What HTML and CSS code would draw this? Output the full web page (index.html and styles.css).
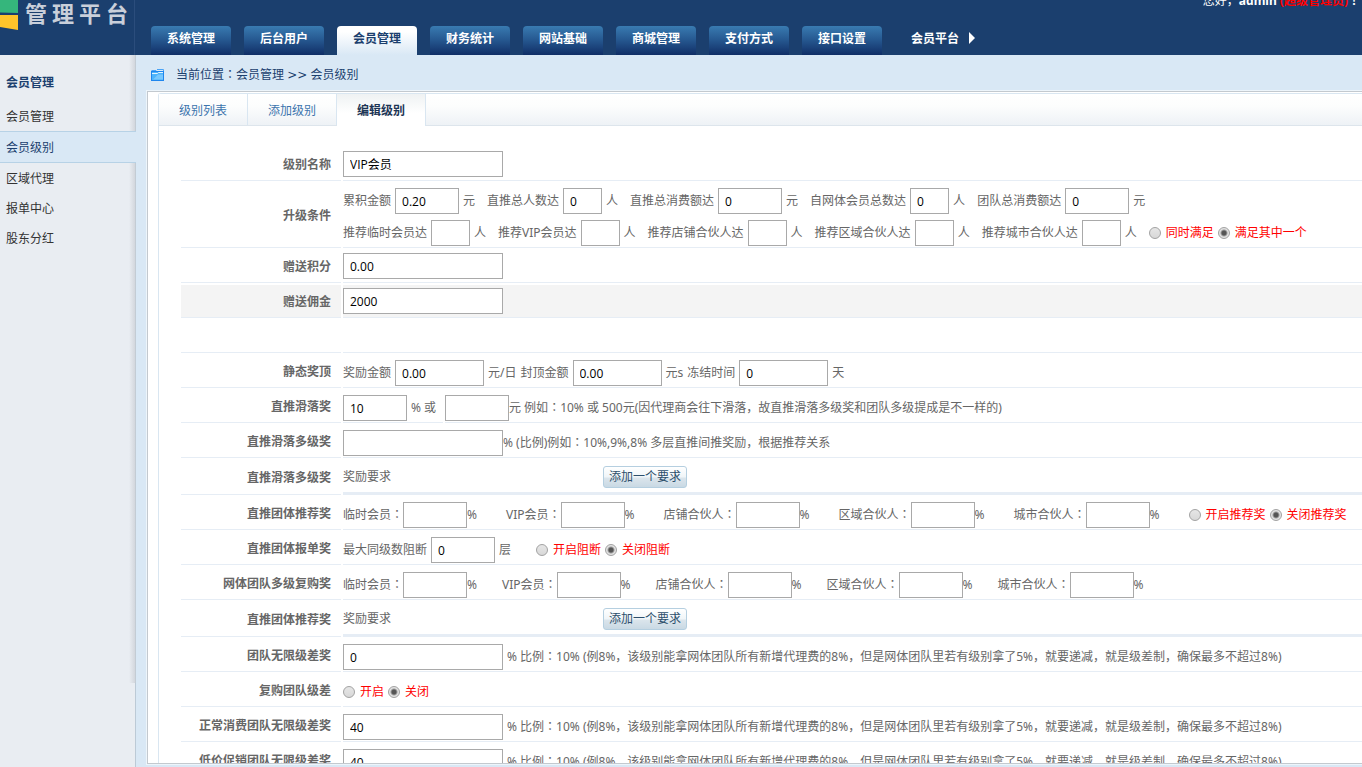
FILE: index.html
```html
<!DOCTYPE html>
<html lang="zh-CN">
<head>
<meta charset="utf-8">
<title>管理平台</title>
<link rel="stylesheet" href="styles.css">
</head>
<body>
<header class="top">
  <div class="brand">
    <svg class="brand-mark" viewBox="0 0 18 30" width="18" height="30" aria-hidden="true">
      <path d="M0 0H18V13L0 12.500Z" fill="#35b67c"/>
      <path d="M0 15H18V30L0 27Z" fill="#ffc42b"/>
    </svg>
    <span class="brand-name">管理平台</span>
  </div>
  <div class="top-main">
    <div class="user">您好，<b>admin <span class="role">(超级管理员)</span><i class="colon" lang="ja">！</i></b></div>
    <nav class="nav">
      <a class="nav-item" href="#">系统管理</a>
      <a class="nav-item" href="#">后台用户</a>
      <a class="nav-item nav-active" href="#">会员管理</a>
      <a class="nav-item" href="#">财务统计</a>
      <a class="nav-item" href="#">网站基础</a>
      <a class="nav-item" href="#">商城管理</a>
      <a class="nav-item" href="#">支付方式</a>
      <a class="nav-item" href="#">接口设置</a>
      <a class="nav-item nav-plain" href="#">会员平台<svg viewBox="0 0 6 12" width="6" height="12" aria-hidden="true"><path d="M0 0L6 6L0 12Z" fill="#fff"/></svg></a>
    </nav>
  </div>
</header>
<div class="body">
  <aside class="side">
    <div class="side-inner">
      <h2 class="side-title">会员管理</h2>
      <a class="side-item" href="#">会员管理</a>
      <a class="side-item side-active" href="#">会员级别</a>
      <a class="side-item" href="#">区域代理</a>
      <a class="side-item" href="#">报单中心</a>
      <a class="side-item" href="#">股东分红</a>
    </div>
  </aside>
  <main class="main">
    <div class="crumb">
      <svg viewBox="0 0 13 12" width="13" height="12" aria-hidden="true">
        <path d="M0.500 1.500H5L6 2.500" fill="none" stroke="#4aa3f5"/>
        <path d="M6 .5H12.500V3" fill="none" stroke="#4aa3f5"/>
        <rect x=".5" y="2.500" width="12" height="9" fill="#4db4fb" stroke="#1f86ee"/>
        <path d="M1 4.500H6.500L7.500 3.500H12" fill="none" stroke="#e4f4ff"/>
        <path d="M2 10.500L7 5.500H12V10.500Z" fill="#8ad0ff" opacity=".7"/>
      </svg>
      <span>当前位置<i class="colon" lang="ja">：</i>会员管理 <span class="sep">&gt;&gt;</span> 会员级别</span>
    </div>
    <div class="frame">
      <div class="panel">
        <nav class="tabs">
          <a class="tab" href="#">级别列表</a>
          <a class="tab" href="#">添加级别</a>
          <a class="tab tab-active" href="#">编辑级别</a>
        </nav>
        <form class="form">
          <div class="row">
            <label class="name" for="f1">级别名称</label>
            <div class="cell"><input class="w-l" id="f1" type="text" value="VIP会员"></div>
          </div>
          <div class="row">
            <span class="name">升级条件</span>
            <div class="cell stack">
              <div class="line">
                <label>累积金额 <input class="w-m" type="text" value="0.20"> 元</label>
                <label>直推总人数达 <input class="w-s" type="text" value="0"> 人</label>
                <label>直推总消费额达 <input class="w-m" type="text" value="0"> 元</label>
                <label>自网体会员总数达 <input class="w-s" type="text" value="0"> 人</label>
                <label>团队总消费额达 <input class="w-m" type="text" value="0"> 元</label>
              </div>
              <div class="line">
                <label>推荐临时会员达 <input class="w-s" type="text"> 人</label>
                <label>推荐VIP会员达 <input class="w-s" type="text"> 人</label>
                <label>推荐店铺合伙人达 <input class="w-s" type="text"> 人</label>
                <label>推荐区域合伙人达 <input class="w-s" type="text"> 人</label>
                <label>推荐城市合伙人达 <input class="w-s" type="text"> 人</label>
                <span class="choices">
                  <label class="choice"><input type="radio" name="cond">同时满足</label>
                  <label class="choice"><input type="radio" name="cond" checked>满足其中一个</label>
                </span>
              </div>
            </div>
          </div>
          <div class="row">
            <label class="name" for="f2">赠送积分</label>
            <div class="cell"><input class="w-l" id="f2" type="text" value="0.00"></div>
          </div>
          <div class="row row-hover">
            <label class="name" for="f3">赠送佣金</label>
            <div class="cell"><input class="w-l" id="f3" type="text" value="2000"></div>
          </div>
          <div class="row">
            <span class="name"></span>
            <div class="cell"></div>
          </div>
          <div class="row">
            <span class="name">静态奖顶</span>
            <div class="cell low">
              <label>奖励金额 <input class="w-x" type="text" value="0.00"> 元/日</label>
              <label>封顶金额 <input class="w-x" type="text" value="0.00"> 元s</label>
              <label>冻结时间 <input class="w-x" type="text" value="0"> 天</label>
            </div>
          </div>
          <div class="row row-split">
            <span class="name">直推滑落奖</span>
            <div class="cell low"><label><input class="w-m" type="text" value="10"> % 或</label></div>
            <div class="cell low"><label class="tight"><input class="w-m" type="text"><span>元 例如<i class="colon" lang="ja">：</i>10% 或 500元(因代理商会往下滑落，故直推滑落多级奖和团队多级提成是不一样的)</span></label></div>
          </div>
          <div class="row">
            <label class="name" for="f4">直推滑落多级奖</label>
            <div class="cell low tight"><input class="w-l" id="f4" type="text"><span>% (比例)例如<i class="colon" lang="ja">：</i>10%,9%,8% 多层直推间推奖励，根据推荐关系</span></div>
          </div>
          <div class="row">
            <span class="name">直推滑落多级奖</span>
            <div class="cell need"><span class="need-text">奖励要求</span><button class="add" type="button">添加一个要求</button></div>
          </div>
          <div class="row">
            <span class="name">直推团体推荐奖</span>
            <div class="cell low gap-xl">
              <label class="tight"><span>临时会员<i class="colon" lang="ja">：</i></span><input class="w-m" type="text">%</label>
              <label class="tight"><span>VIP会员<i class="colon" lang="ja">：</i></span><input class="w-m" type="text">%</label>
              <label class="tight"><span>店铺合伙人<i class="colon" lang="ja">：</i></span><input class="w-m" type="text">%</label>
              <label class="tight"><span>区域合伙人<i class="colon" lang="ja">：</i></span><input class="w-m" type="text">%</label>
              <label class="tight"><span>城市合伙人<i class="colon" lang="ja">：</i></span><input class="w-m" type="text">%</label>
              <span class="choices">
                <label class="choice"><input type="radio" name="rec">开启推荐奖</label>
                <label class="choice"><input type="radio" name="rec" checked>关闭推荐奖</label>
              </span>
            </div>
          </div>
          <div class="row">
            <span class="name">直推团体报单奖</span>
            <div class="cell low gap-l">
              <label>最大同级数阻断 <input class="w-m" type="text" value="0"> 层</label>
              <span class="choices">
                <label class="choice"><input type="radio" name="block">开启阻断</label>
                <label class="choice"><input type="radio" name="block" checked>关闭阻断</label>
              </span>
            </div>
          </div>
          <div class="row">
            <span class="name">网体团队多级复购奖</span>
            <div class="cell low gap-l">
              <label class="tight"><span>临时会员<i class="colon" lang="ja">：</i></span><input class="w-m" type="text">%</label>
              <label class="tight"><span>VIP会员<i class="colon" lang="ja">：</i></span><input class="w-m" type="text">%</label>
              <label class="tight"><span>店铺合伙人<i class="colon" lang="ja">：</i></span><input class="w-m" type="text">%</label>
              <label class="tight"><span>区域合伙人<i class="colon" lang="ja">：</i></span><input class="w-m" type="text">%</label>
              <label class="tight"><span>城市合伙人<i class="colon" lang="ja">：</i></span><input class="w-m" type="text">%</label>
            </div>
          </div>
          <div class="row">
            <span class="name">直推团体推荐奖</span>
            <div class="cell need"><span class="need-text">奖励要求</span><button class="add" type="button">添加一个要求</button></div>
          </div>
          <div class="row">
            <label class="name" for="f5">团队无限级差奖</label>
            <div class="cell low"><input class="w-l" id="f5" type="text" value="0"><span>% 比例<i class="colon" lang="ja">：</i>10% (例8%，该级别能拿网体团队所有新增代理费的8%，但是网体团队里若有级别拿了5%，就要递减，就是级差制，确保最多不超过8%)</span></div>
          </div>
          <div class="row">
            <span class="name">复购团队级差</span>
            <div class="cell low">
              <span class="choices">
                <label class="choice"><input type="radio" name="rebuy">开启</label>
                <label class="choice"><input type="radio" name="rebuy" checked>关闭</label>
              </span>
            </div>
          </div>
          <div class="row">
            <label class="name" for="f6">正常消费团队无限级差奖</label>
            <div class="cell low"><input class="w-l" id="f6" type="text" value="40"><span>% 比例<i class="colon" lang="ja">：</i>10% (例8%，该级别能拿网体团队所有新增代理费的8%，但是网体团队里若有级别拿了5%，就要递减，就是级差制，确保最多不超过8%)</span></div>
          </div>
          <div class="row">
            <label class="name" for="f7">低价促销团队无限级差奖</label>
            <div class="cell low"><input class="w-l" id="f7" type="text" value="40"><span>% 比例<i class="colon" lang="ja">：</i>10% (例8%，该级别能拿网体团队所有新增代理费的8%，但是网体团队里若有级别拿了5%，就要递减，就是级差制，确保最多不超过8%)</span></div>
          </div>
        </form>
      </div>
    </div>
  </main>
</div>
</body>
</html>
```
FILE: styles.css
```css
* { box-sizing: border-box; }

body {
  margin: 0;
  height: 100vh;
  display: flex;
  flex-direction: column;
  overflow: hidden;
  background: #d9e8f5;
  color: #666;
  font: 12px/16px "Noto Sans", "Noto Sans CJK SC", sans-serif;
}

a { color: inherit; text-decoration: none; }

/* Full-width punctuation centred in its box */
.colon {
  font-family: "Noto Sans CJK JP", sans-serif;
  font-style: normal;
  line-height: 0;
}
.sep { font-family: "DejaVu Sans", sans-serif; line-height: 0; }

/* Header */
.top {
  flex: none;
  height: 55px;
  display: flex;
  background: #1b3f6e;
  color: #fff;
  overflow: hidden;
}
.brand {
  flex: none;
  width: 135px;
  display: flex;
  align-items: flex-start;
  gap: 7px;
  border-right: 1px solid #2b4d7c;
}
.brand-name {
  color: #c9cfda;
  font-size: 22px;
  font-weight: bold;
  line-height: 26px;
  letter-spacing: 5px;
  white-space: nowrap;
}
.top-main {
  flex: 1;
  min-width: 0;
  display: flex;
  flex-direction: column;
  justify-content: space-between;
  padding-left: 16px;
}
.user {
  margin-top: -7px;
  padding-right: 2px;
  text-align: right;
  white-space: nowrap;
}
.role { color: #f00; }
.nav { display: flex; gap: 13px; }
.nav-item {
  width: 80px;
  height: 29px;
  line-height: 26px;
  text-align: center;
  font-weight: bold;
  white-space: nowrap;
  border-radius: 4px 4px 0 0;
  background: linear-gradient(#397bb1, #275a92 45%, #102e66);
}
.nav-active { color: #1b3f6e; background: linear-gradient(#fff 20%, #d9e8f5); }
.nav-plain {
  display: flex;
  gap: 10px;
  padding-left: 16px;
  background: none;
}
.nav-plain svg { flex: none; margin-top: 6px; }

/* Sidebar */
.body { flex: 1; min-height: 0; display: flex; }
.side {
  flex: none;
  width: 136px;
  background: #e9edf2;
  border-right: 1px solid #bccad6;
}
.side-inner {
  height: 628px;
  margin-right: -1px;
  padding-top: 18px;
  border-right: 1px solid #c3ccd4;
  background: linear-gradient(to left, #d3d7dd, #e9edf2 6px);
}
.side-title {
  margin: 0 0 8px;
  padding-left: 6px;
  font-size: 12px;
  line-height: 20px;
  color: #1b3f6e;
}
.side-item {
  display: block;
  padding: 2px 0 0 6px;
  line-height: 28px;
  color: #333;
}
.side-active {
  margin-right: -1px;
  border: solid #b7d2e6;
  border-width: 1px 0;
  background: #d9e8f5;
  color: #1b3f6e;
}

/* Content frame */
.main {
  flex: 1;
  min-width: 0;
  display: flex;
  flex-direction: column;
  padding: 0 0 3px 11px;
}
.crumb {
  flex: none;
  height: 36px;
  display: flex;
  align-items: center;
  gap: 12px;
  padding: 3px 0 0 4px;
  color: #1b3f6e;
}
.frame {
  flex: 1;
  min-height: 0;
  padding: 1px 0 0 10px;
  background: #fff;
  border: solid #c3c9cf;
  border-width: 1px 0 1px 1px;
  outline: 1px solid #edf5fb;
  overflow: hidden;
}
.panel {
  border: solid #d9e6f1;
  border-width: 1px 0 0 1px;
  border-radius: 3px 0 0 0;
}
.tabs {
  display: flex;
  height: 32px;
  border-bottom: 1px solid #dde5ec;
  background: linear-gradient(#fff, #fcfdfd 40%, #eef2f6);
}
.tab {
  width: 89px;
  height: 31px;
  line-height: 34px;
  text-align: center;
  border-right: 1px solid #d9e6f1;
  color: #3c74ad;
}
.tab-active {
  height: 32px;
  background: linear-gradient(#eff2f3, #fff 60%);
  color: #1d3555;
  font-weight: bold;
}

/* Form rows */
.form {
  display: flex;
  flex-direction: column;
  gap: 2px;
  padding: 22px 0 0 22px;
  white-space: nowrap;
}
.row {
  display: grid;
  grid-template-columns: 160px minmax(0, 1fr);
  gap: 2px;
  min-height: 33px;
}
.row-split { grid-template-columns: 160px 100px minmax(0, 1fr); }
.name {
  display: flex;
  align-items: center;
  justify-content: flex-end;
  padding: 2px 10px 0 0;
  border-bottom: 1px solid #e6edf5;
  font-weight: bold;
}
.cell {
  display: flex;
  align-items: center;
  gap: 4px;
  border-bottom: 1px solid #e6edf5;
}
.low { padding-top: 4px; }
.row-hover .name, .row-hover .cell { background: #f4f4f4; }
.stack {
  flex-direction: column;
  align-items: flex-start;
  gap: 6px;
  padding: 5px 0 1px;
}
.line { display: flex; gap: 12px; }
.cell label, .choices { display: flex; align-items: center; gap: 4px; }
.cell.tight, .cell label.tight { gap: 0; }
.gap-l { gap: 25px; }
.gap-xl { gap: 29px; }
.need { height: 35px; padding-top: 2px; border-bottom-width: 3px; }
.need-text { width: 256px; }

.cell input[type="text"] {
  height: 26px;
  padding: 0 6px;
  border: 1px solid #a9a9a9;
  background: #fff;
  color: #000;
  font: 12px/16px "Open Sans", "Noto Sans CJK SC", sans-serif;
}
.cell .w-s { width: 39px; }
.cell .w-m { width: 64px; }
.cell .w-x { width: 89px; }
.cell .w-l { width: 160px; }

.cell .choice { color: #f00; gap: 5px; }
.choice input {
  appearance: none;
  width: 12px;
  height: 12px;
  margin: 0;
  border: 1px solid #a2a2a2;
  border-radius: 50%;
  background: linear-gradient(#e6e6e6, #d8d8d8);
}
.choice input:checked {
  background: radial-gradient(circle, #555 2px, #e2e2e2 4px);
}

.add {
  width: 84px;
  height: 22px;
  padding: 0;
  border: 1px solid #b5cfe0;
  border-radius: 3px;
  background: linear-gradient(#fff, #f0f5f8 50%, #dbe5ec 55%, #c9d9e4);
  color: #2d4f6c;
  font: inherit;
}
```
